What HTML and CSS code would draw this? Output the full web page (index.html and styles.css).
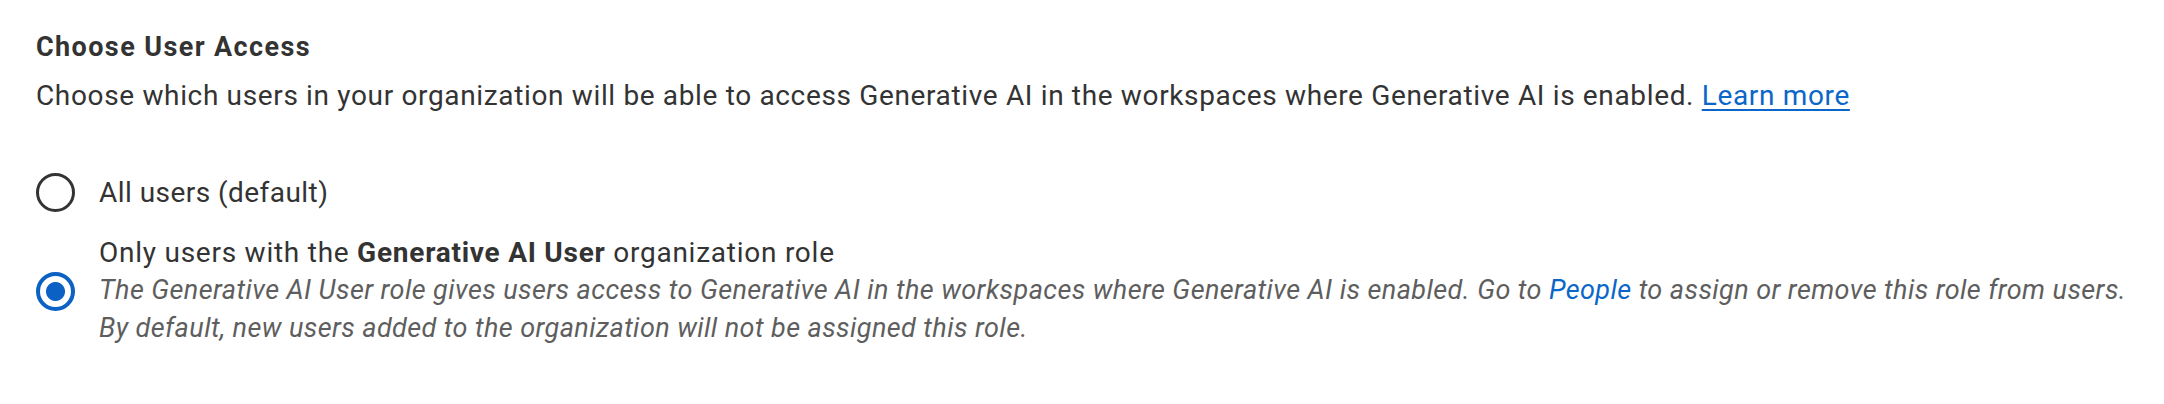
FILE: index.html
```html
<!DOCTYPE html>
<html lang="en">
<head>
    <meta charset="UTF-8">
    <meta name="viewport" content="width=device-width, initial-scale=1.0">
    <title>Generative AI Access</title>
    <link rel="stylesheet" href="styles.css">
</head>
<body>

    <div class="container">
        <h2 class="section-title">Choose User Access</h2>
        <p class="section-desc">
            Choose which users in your organization will be able to access Generative AI in the workspaces where Generative AI is enabled.
            <a href="#" class="link">Learn more</a>
        </p>

        <!-- Access options -->
        <div class="options">
            <label class="option">
                <input type="radio" name="access" value="all" />
                <span class="option-text">All users (default)</span>
            </label>

            <label class="option">
                <input type="radio" name="access" value="role" checked />
                <span class="option-text">
                    <span class="option-label">Only users with the <strong>Generative AI User</strong> organization role</span>
                    <span class="option-help">The Generative AI User role gives users access to Generative AI in the workspaces where Generative AI is enabled. Go to <a href="#" class="help-link">People</a> to assign or remove this role from users.<br>By default, new users added to the organization will not be assigned this role.</span>
                </span>
            </label>
        </div>
    </div>

</body>
</html>
```
FILE: styles.css
```css
body {
    margin: 0;
    background-color: #fff;
    color: #333;
    font-family: Roboto, "Liberation Sans", Arial, sans-serif;
}
.container {
    padding: 29px 36px;
}
.section-title {
    margin: 0;
    font-size: 27px;
    line-height: 36px;
    font-weight: 700;
    letter-spacing: 1.4px;
    color: #333;
}
.section-desc {
    margin: 12px 0 0;
    font-size: 28px;
    line-height: 38px;
    letter-spacing: 0.65px;
}
.link {
    color: #0a66c8;
    text-decoration: underline;
    text-decoration-thickness: 2px;
    text-underline-offset: 4px;
}
.options {
    display: flex;
    flex-direction: column;
    gap: 23px;
    margin-top: 58px;
}
.option {
    display: flex;
    align-items: center;
    gap: 24px;
    cursor: pointer;
}
.option input {
    appearance: none;
    -webkit-appearance: none;
    flex: none;
    width: 39px;
    height: 39px;
    margin: 0;
    box-sizing: border-box;
    border: 3px solid #333;
    border-radius: 50%;
    background-color: #fff;
    cursor: pointer;
}
.option input:checked {
    border: 4px solid #0b62c4;
    background: radial-gradient(circle at center, #0b62c4 9px, #fff 10px);
}
.option-text {
    display: flex;
    flex-direction: column;
    font-size: 28px;
    line-height: 38px;
    letter-spacing: 0.45px;
}
.option-label {
    line-height: 36px;
    letter-spacing: 0.75px;
}
.option-label strong {
    font-weight: 700;
}
.option-help {
    font-size: 27px;
    line-height: 38px;
    font-style: italic;
    letter-spacing: 0.42px;
    color: #5e5e5e;
}
.help-link {
    color: #0a66c8;
    text-decoration: none;
}
```
